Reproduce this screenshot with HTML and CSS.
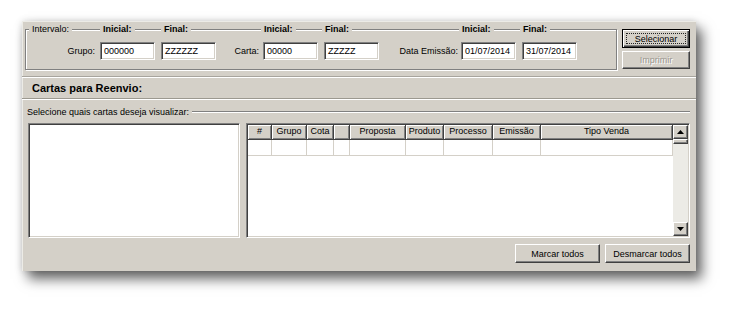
FILE: index.html
```html
<!DOCTYPE html>
<html lang="pt">
<head>
<meta charset="utf-8">
<title>Cartas para Reenvio</title>
<link rel="stylesheet" href="styles.css">
</head>
<body>
<div class="win">
  <div class="top">
    <div class="gbox">
      <div class="gline">
        <div class="cell c0"><span class="lb">Intervalo:</span></div>
        <div class="cell ci"><span class="lb b">Inicial:</span></div>
        <div class="cell cf1"><span class="lb b">Final:</span></div>
        <div class="cell ci"><span class="lb b">Inicial:</span></div>
        <div class="cell cf2"><span class="lb b">Final:</span></div>
        <div class="cell ci"><span class="lb b">Inicial:</span></div>
        <div class="cell clast"><span class="lb b">Final:</span></div>
      </div>
      <div class="frow">
        <div class="fl l1">Grupo:</div>
        <div class="in">000000</div>
        <div class="in">ZZZZZZ</div>
        <div class="fl l2">Carta:</div>
        <div class="in">00000</div>
        <div class="in">ZZZZZ</div>
        <div class="fl l3">Data Emissão:</div>
        <div class="in">01/07/2014</div>
        <div class="in">31/07/2014</div>
      </div>
    </div>
    <div class="bcol">
      <div class="btn def"><span class="focus">Selecionar</span></div>
      <div class="btn dis">Imprimir</div>
    </div>
  </div>
  <div class="hdr">Cartas para Reenvio:</div>
  <div class="sel">
    <div class="srow"><span>Selecione quais cartas deseja visualizar:</span><div class="rule"></div></div>
    <div class="lists">
      <div class="listbox"></div>
      <div class="tbl">
        <div class="cols">
          <div class="hrow">
            <div class="hc w1">#</div>
            <div class="hc w2">Grupo</div>
            <div class="hc w3">Cota</div>
            <div class="hc w4"></div>
            <div class="hc w5">Proposta</div>
            <div class="hc w6">Produto</div>
            <div class="hc w7">Processo</div>
            <div class="hc w8">Emissão</div>
            <div class="hc w9">Tipo Venda</div>
          </div>
          <div class="drow">
            <div class="dc w1"></div>
            <div class="dc w2"></div>
            <div class="dc w3"></div>
            <div class="dc w4"></div>
            <div class="dc w5"></div>
            <div class="dc w6"></div>
            <div class="dc w7"></div>
            <div class="dc w8"></div>
            <div class="dc w9"></div>
          </div>
        </div>
        <div class="sb">
          <div class="sbtn"><svg width="7" height="4" viewBox="0 0 7 4"><polygon points="0,4 3.5,0 7,4" fill="#000"/></svg></div>
          <div class="thumb"></div>
          <div class="track"></div>
          <div class="sbtn"><svg width="7" height="4" viewBox="0 0 7 4"><polygon points="0,0 7,0 3.5,4" fill="#000"/></svg></div>
        </div>
      </div>
    </div>
    <div class="actions">
      <div class="btn wide">Marcar todos</div>
      <div class="btn wide">Desmarcar todos</div>
    </div>
  </div>
</div>
</body>
</html>
```
FILE: styles.css
```css
* { box-sizing: border-box; }
html, body { height: 100%; }
body {
  margin: 0;
  min-height: 313px;
  padding-top: 21px;
  background: #fff;
  font-family: "Liberation Sans", Arial, sans-serif;
  font-size: 9px;
  color: #000;
}
.win {
  margin-left: 22px;
  width: 674px;
  height: 250px;
  background: #d4d0c8;
  display: flex;
  flex-direction: column;
  box-shadow: inset 1px 1px 0 #ecebe6, 6px 8px 12px rgba(0,0,0,0.6), 0 0 7px rgba(0,0,0,0.15);
}
.top {
  display: flex;
  align-items: flex-start;
  gap: 5px;
  padding: 8px 6px 6px 3px;
  height: 55px;
}
.gbox {
  width: 592px;
  height: 41px;
  border: 1px solid #808080;
  box-shadow: inset 1px 1px 0 #fff, 1px 1px 0 #fff;
}
.gline {
  display: flex;
  height: 11px;
  line-height: 11px;
  margin-top: -6px;
}
.cell { flex: none; }
.c0 { width: 74px; padding-left: 3px; }
.ci { width: 61px; }
.cf1 { width: 100px; }
.cf2 { width: 137px; }
.clast { flex: 1; }
.lb {
  background: #d4d0c8;
  padding: 0 3px;
  white-space: nowrap;
}
.lb.b { font-weight: bold; }
.frow {
  display: flex;
  align-items: center;
  height: 18px;
  margin-top: 7px;
}
.fl { text-align: right; white-space: nowrap; }
.l1 { width: 74px; padding-right: 5px; }
.l2 { width: 47px; padding-right: 4px; }
.l3 { width: 82px; padding-right: 3px; }
.in {
  width: 55px;
  height: 18px;
  line-height: 16px;
  padding-left: 3px;
  background: #fff;
  border: 1px solid;
  border-color: #808080 #fff #fff #808080;
  box-shadow: inset 1px 1px 0 #404040, inset -1px -1px 0 #d4d0c8;
  white-space: nowrap;
  overflow: hidden;
}
.in + .in { margin-left: 6px; }
.bcol {
  display: flex;
  flex-direction: column;
  gap: 3px;
  width: 68px;
}
.btn {
  display: flex;
  align-items: center;
  justify-content: center;
  height: 19px;
  background: #d4d0c8;
  border: 1px solid;
  border-color: #fff #404040 #404040 #fff;
  box-shadow: inset -1px -1px 0 #808080;
  white-space: nowrap;
}
.btn.def {
  border: 1px solid #000;
  box-shadow: inset 1px 1px 0 #fff, inset -1px -1px 0 #404040, inset -2px -2px 0 #808080;
  padding: 3px;
  align-items: stretch;
}
.focus {
  flex: 1;
  display: flex;
  align-items: center;
  justify-content: center;
  border: 1px dotted #222;
}
.btn.dis {
  height: 18px;
  color: #9a978f;
  text-shadow: 1px 1px 0 #fff;
}
.hdr {
  height: 23px;
  display: flex;
  align-items: center;
  padding-left: 10px;
  font-size: 11px;
  font-weight: bold;
  border-top: 1px solid #a8a59e;
  border-bottom: 1px solid #9c9990;
  box-shadow: inset 0 1px 0 #fff, 0 1px 0 #fff;
}
.sel {
  padding: 0 6px;
  display: flex;
  flex-direction: column;
}
.srow {
  display: flex;
  align-items: center;
  height: 11px;
  margin-top: 7px;
  margin-left: -1px;
  white-space: nowrap;
}
.rule {
  flex: 1;
  margin-left: 3px;
  border-top: 1px solid #808080;
  border-bottom: 1px solid #fff;
}
.lists {
  display: flex;
  gap: 6px;
  margin-top: 6px;
  height: 115px;
}
.listbox, .tbl {
  height: 115px;
  background: #fff;
  border: 1px solid;
  border-color: #808080 #fff #fff #808080;
  box-shadow: inset 1px 1px 0 #404040, inset -1px -1px 0 #d4d0c8;
}
.listbox { width: 212px; }
.tbl {
  width: 444px;
  padding: 1px;
  display: flex;
}
.cols { flex: 1; display: flex; flex-direction: column; }
.hrow { display: flex; height: 15px; }
.drow { display: flex; height: 16px; }
.hc {
  flex: none;
  text-align: center;
  line-height: 13px;
  background: #d4d0c8;
  border-right: 1px solid #404040;
  border-bottom: 1px solid #404040;
  box-shadow: inset 1px 1px 0 #fff, inset -1px -1px 0 #808080;
  white-space: nowrap;
  overflow: hidden;
}
.dc {
  flex: none;
  border-right: 1px solid #d4d0c8;
  border-bottom: 1px solid #d4d0c8;
}
.w1 { width: 24px; }
.w2 { width: 35px; }
.w3 { width: 27px; }
.w4 { width: 16px; }
.w5 { width: 56px; }
.w6 { width: 38px; }
.w7 { width: 49px; }
.w8 { width: 48px; }
.w9 { flex: 1; }
.sb {
  width: 15px;
  display: flex;
  flex-direction: column;
  background: #ecebe6;
}
.sbtn, .thumb {
  background: #d4d0c8;
  border: 1px solid;
  border-color: #fff #404040 #404040 #fff;
  box-shadow: inset -1px -1px 0 #808080;
}
.sbtn {
  height: 14px;
  display: flex;
  align-items: center;
  justify-content: center;
}
.thumb { height: 5px; }
.track { flex: 1; }
.actions {
  display: flex;
  justify-content: flex-end;
  gap: 5px;
  margin-top: 6px;
}
.btn.wide { width: 85px; }
```
